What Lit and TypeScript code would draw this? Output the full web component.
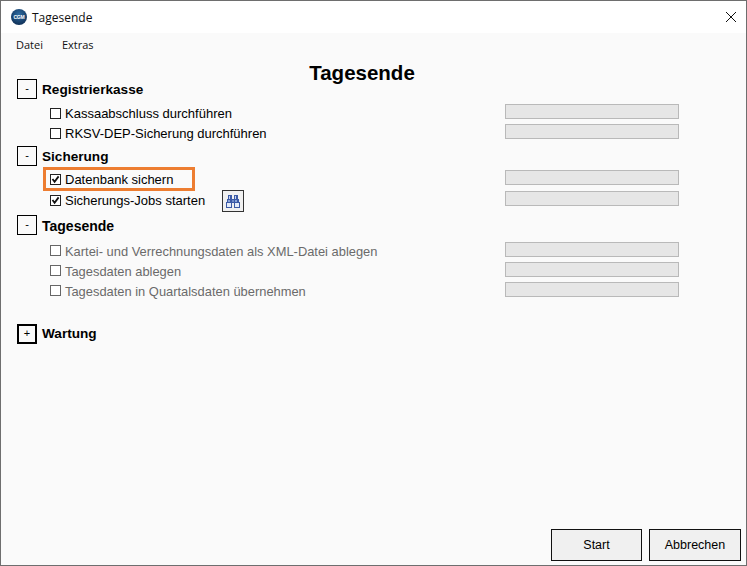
import { LitElement, html, css, nothing } from "lit";
import { customElement } from "lit/decorators.js";

interface Item { label: string; checked?: boolean; muted?: boolean; finder?: boolean; marked?: boolean; }
interface Section { name: string; open: boolean; cls: string; items: Item[]; }

const sections: Section[] = [
  { name: "Registrierkasse", open: true, cls: "s1", items: [
    { label: "Kassaabschluss durchführen" },
    { label: "RKSV-DEP-Sicherung durchführen" },
  ]},
  { name: "Sicherung", open: true, cls: "s2", items: [
    { label: "Datenbank sichern", checked: true, marked: true },
    { label: "Sicherungs-Jobs starten", checked: true, finder: true },
  ]},
  { name: "Tagesende", open: true, cls: "s3", items: [
    { label: "Kartei- und Verrechnungsdaten als XML-Datei ablegen", muted: true },
    { label: "Tagesdaten ablegen", muted: true },
    { label: "Tagesdaten in Quartalsdaten übernehmen", muted: true },
  ]},
  { name: "Wartung", open: false, cls: "s4", items: [] },
];

@customElement("app-root")
export class AppRoot extends LitElement {
  static styles = css`
    :host { display: block; width: 747px; height: 566px; font-family: "Liberation Sans", Arial, sans-serif; color: #000; }
    .window { box-sizing: border-box; width: 747px; height: 566px; border: 1px solid #6e6e6e; background: #fafafa; display: flex; flex-direction: column; }
    .titlebar { height: 32px; background: #fff; display: flex; align-items: center; padding-left: 10px; flex: none; }
    .logo { width: 16px; height: 16px; border-radius: 50%; background: radial-gradient(circle at 50% 35%, #2f6da3, #12345c 75%); color: #fff; font-size: 5px; font-weight: 700; display: flex; align-items: center; justify-content: center; letter-spacing: -0.2px; }
    .wintitle { font-family: "Open Sans", sans-serif; font-size: 12px; margin-left: 5px; color: #111; }
    .close { margin-left: auto; margin-right: 10px; width: 10px; height: 10px; display: block; }
    .menu { display: flex; height: 23px; align-items: center; padding-left: 15px; gap: 19px; flex: none; font-family: "Open Sans", sans-serif; font-size: 11px; color: #111; }
    .main { flex: 1; display: flex; flex-direction: column; padding: 5px 0 0 16px; min-height: 0; }
    h1 { margin: 0; height: 18px; line-height: 24px; font-size: 20.5px; font-weight: 700; text-align: center; padding-right: 39px; }
    .head { display: flex; align-items: center; height: 20px; }
    .toggle { box-sizing: border-box; width: 20px; height: 20px; border: 1px solid #000; background: #fafafa; padding: 0 0 2px; margin: 0; font: 11px "Liberation Sans", sans-serif; display: flex; align-items: center; justify-content: center; color: #000; }
    .closed .toggle { border-width: 2px; }
    .head b { margin-left: 5px; font-size: 13.6px; font-weight: 700; }
    .closed b { position: relative; top: -1px; }
    .s3 b { position: relative; top: 1px; font-size: 14px; }
    .rows { display: flex; flex-direction: column; gap: 5px; }
    .s1 .rows { margin-top: 5px; }
    .s2 { margin-top: 7px; }
    .s2 .rows { margin-top: 4px; gap: 6px; }
    .s3 { margin-top: 9px; }
    .s3 .rows { margin-top: 7px; }
    .s4 { margin-top: 27px; }
    .row { position: relative; display: flex; height: 15px; align-items: flex-end; padding-left: 33px; font-size: 13px; }
    .row.muted { font-size: 12.9px; }
    .box { box-sizing: border-box; width: 11px; height: 11px; border: 1px solid #222; background: #fff; flex: none; display: block; }
    .muted .box { border-color: #666; margin-bottom: 1px; }
    .muted .label { color: #6a6a6a; }
    .label { margin-left: 4px; line-height: 15px; white-space: nowrap; position: relative; top: 2px; }
    .bar { box-sizing: border-box; position: absolute; left: 488px; top: 0; width: 174px; height: 15px; background: #e6e6e6; border: 1px solid #b9b9b9; }
    .finder { box-sizing: border-box; width: 22px; height: 22px; margin: 0 0 -6px 17px; padding: 0; border: 1px solid #333; background: #f0f0f0; display: flex; align-items: center; justify-content: center; flex: none; }
    .finder svg { display: block; }
    .mark { position: absolute; left: 26px; top: -3px; box-sizing: border-box; width: 152px; height: 24px; border: 3px solid #ed7d31; pointer-events: none; }
    .actions { flex: none; display: flex; justify-content: flex-end; gap: 7px; padding: 0 5px 4px 0; }
    .actions button { box-sizing: border-box; height: 32px; width: 92px; background: #f0f0f0; border: 1px solid #111; font: 12.5px "Liberation Sans", sans-serif; color: #000; padding: 0; margin: 0; }
    .actions button:first-child { width: 91px; }
    .spacer { flex: 1; }
  `;

  private check() {
    return html`<svg class="box" viewBox="0 0 9 9"><path d="M1.5 4 L3.6 6.8 L7.6 1.4" fill="none" stroke="#111" stroke-width="1.8"/></svg>`;
  }

  private binoculars() {
    return html`<svg width="16" height="13" viewBox="0 0 16 13" shape-rendering="crispEdges">
      <path d="M3 0h4v4h2V0h4v4h1v3h1v6h-6V8H7v5H1V7h1V4h1z" fill="#3c5aa6"/>
      <rect x="4" y="1" width="1" height="3" fill="#c4d3ef"/>
      <rect x="10" y="1" width="1" height="3" fill="#c4d3ef"/>
      <rect x="3" y="5" width="2" height="2" fill="#8aa4d8"/>
      <rect x="10" y="5" width="2" height="2" fill="#8aa4d8"/>
      <rect x="2" y="8" width="4" height="4" fill="#e3ebf9"/>
      <rect x="10" y="8" width="4" height="4" fill="#e3ebf9"/>
      <rect x="7" y="5" width="2" height="2" fill="#6f8bc8"/>
    </svg>`;
  }

  render() {
    return html`<div class="window">
      <div class="titlebar">
        <span class="logo">CGM</span>
        <span class="wintitle">Tagesende</span>
        <svg class="close" viewBox="0 0 10 10"><path d="M0 0 L10 10 M10 0 L0 10" stroke="#111" stroke-width="1" fill="none"/></svg>
      </div>
      <div class="menu"><span>Datei</span><span>Extras</span></div>
      <div class="main">
        <h1>Tagesende</h1>
        ${sections.map((s) => html`<section class="${s.cls} ${s.open ? "" : "closed"}">
          <div class="head"><button class="toggle">${s.open ? "-" : "+"}</button><b>${s.name}</b></div>
          ${s.items.length ? html`<div class="rows">
            ${s.items.map((i) => html`<div class="row ${i.muted ? "muted" : ""}">
              ${i.checked ? this.check() : html`<span class="box"></span>`}
              <span class="label">${i.label}</span>
              ${i.finder ? html`<button class="finder">${this.binoculars()}</button>` : nothing}
              ${i.marked ? html`<span class="mark"></span>` : nothing}
              <span class="bar"></span>
            </div>`)}
          </div>` : nothing}
        </section>`)}
        <div class="spacer"></div>
      </div>
      <div class="actions"><button>Start</button><button>Abbrechen</button></div>
    </div>`;
  }
}
